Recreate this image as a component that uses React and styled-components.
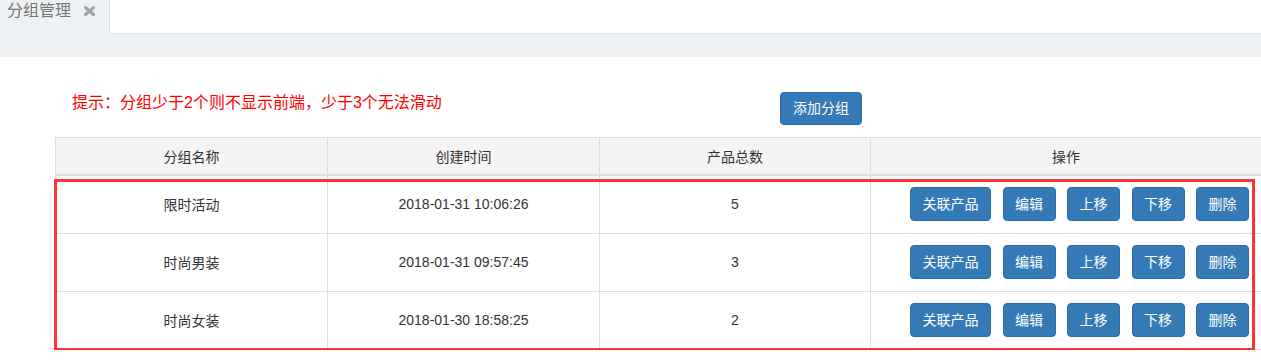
import React from "react";
import styled, { createGlobalStyle } from "styled-components";

const GlobalStyle = createGlobalStyle`
  body {
    margin: 0;
    background: #fff;
    font-family: "Liberation Sans", "Noto Sans CJK SC", sans-serif;
    color: #333;
  }
`;

const Page = styled.div`
  width: 1261px;
  overflow: hidden;
`;

const TabBar = styled.div`
  background: #eef1f3;
  padding-bottom: 23px;
`;

const TabStrip = styled.div`
  display: flex;
  height: 34px;
`;

const Tab = styled.div`
  width: 109px;
  box-sizing: border-box;
  display: flex;
  align-items: flex-start;
  gap: 13px;
  padding: 0 0 0 7px;
  font-size: 16px;
  line-height: 22px;
  color: #777;
`;

const CloseIcon = styled.svg`
  margin-top: 6px;
  flex: none;
`;

const TabFill = styled.div`
  flex: 1;
  background: #fff;
  border-left: 1px solid #dde1e4;
  border-bottom: 1px solid #dde1e4;
`;

const Content = styled.div`
  padding-left: 55px;
`;

const Toolbar = styled.div`
  display: grid;
  grid-template-columns: 725px auto;
  align-items: start;
  padding: 35px 0 12px;
`;

const Hint = styled.div`
  padding-left: 17px;
  font-size: 16px;
  line-height: 22px;
  color: #f00;
`;

const Button = styled.button`
  font-family: inherit;
  font-size: 14px;
  line-height: 20px;
  padding: 6px 11.5px;
  color: #fff;
  background: #337ab7;
  border: 1px solid #2e6da4;
  border-radius: 4px;
  cursor: pointer;
  white-space: nowrap;
`;

const AddButton = styled(Button)`
  justify-self: start;
  padding: 5px 12px 6px;
`;

const TableWrap = styled.div`
  position: relative;
  width: 1207px;
`;

const Table = styled.table`
  width: 100%;
  border-collapse: collapse;
  table-layout: fixed;
  font-size: 14px;
  color: #333;
`;

const Th = styled.th`
  height: 36px;
  padding: 0 8px;
  font-weight: normal;
  background: #f4f4f4;
  border: 1px solid #ddd;
  border-bottom-width: 2px;
  text-align: center;
`;

const Row = styled.tr`
  height: 58px;
`;

const Td = styled.td`
  padding: 0 8px;
  border: 1px solid #ddd;
  text-align: center;
  vertical-align: middle;
`;

const Actions = styled.div`
  display: flex;
  justify-content: flex-end;
  gap: 11.5px;
  padding-right: 4px;
`;

const Highlight = styled.div`
  position: absolute;
  left: -1px;
  top: 42px;
  width: 1201px;
  height: 172px;
  box-sizing: border-box;
  border: 3px solid #f33;
  pointer-events: none;
`;

const groups = [
  { name: "限时活动", created: "2018-01-31 10:06:26", count: 5 },
  { name: "时尚男装", created: "2018-01-31 09:57:45", count: 3 },
  { name: "时尚女装", created: "2018-01-30 18:58:25", count: 2 },
];

const actions = ["关联产品", "编辑", "上移", "下移", "删除"];

export default function App() {
  return (
    <Page>
      <GlobalStyle />
      <TabBar>
        <TabStrip>
          <Tab>
            分组管理
            <CloseIcon width="11" height="10" viewBox="0 0 11 10">
              <path
                d="M1.5 1.5 L9.5 8.5 M9.5 1.5 L1.5 8.5"
                stroke="#97a3ad"
                strokeWidth="3"
                strokeLinecap="square"
              />
            </CloseIcon>
          </Tab>
          <TabFill />
        </TabStrip>
      </TabBar>
      <Content>
        <Toolbar>
          <Hint>提示：分组少于2个则不显示前端，少于3个无法滑动</Hint>
          <AddButton>添加分组</AddButton>
        </Toolbar>
        <TableWrap>
          <Table>
            <colgroup>
              <col style={{ width: 272 }} />
              <col style={{ width: 272 }} />
              <col style={{ width: 271 }} />
              <col />
            </colgroup>
            <thead>
              <tr>
                <Th>分组名称</Th>
                <Th>创建时间</Th>
                <Th>产品总数</Th>
                <Th>操作</Th>
              </tr>
            </thead>
            <tbody>
              {groups.map((g) => (
                <Row key={g.name}>
                  <Td>{g.name}</Td>
                  <Td>{g.created}</Td>
                  <Td>{g.count}</Td>
                  <Td>
                    <Actions>
                      {actions.map((a) => (
                        <Button key={a}>{a}</Button>
                      ))}
                    </Actions>
                  </Td>
                </Row>
              ))}
            </tbody>
          </Table>
          <Highlight />
        </TableWrap>
      </Content>
    </Page>
  );
}
